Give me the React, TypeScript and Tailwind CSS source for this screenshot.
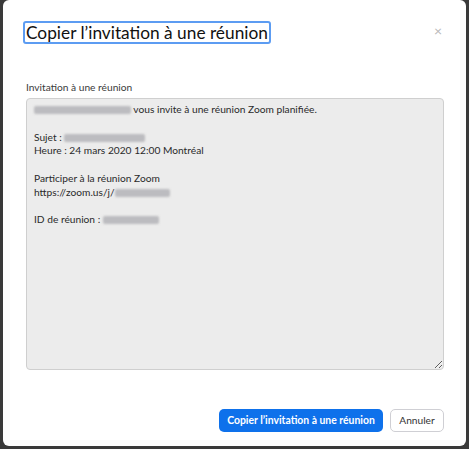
import React from "react";

function Blur({ w }: { w: number }) {
  return (
    <span
      className="inline-block align-middle h-[8px] bg-[#bcbcc0] blur-[1.2px] rounded-[2px]"
      style={{ width: w }}
    />
  );
}

export default function App() {
  return (
    <div className="w-[469px] h-[449px] bg-[#3a3a3a] px-[3px] pb-[3px] font-['Lato','Noto_Sans',sans-serif]">
      <div className="w-full h-full bg-white rounded-[6px] flex flex-col">
        <div className="flex items-start justify-between pt-[21px] pl-[20px] pr-[24px]">
          <div className="border-2 border-[#5c9cf2] rounded-[3px] px-[1px] h-[23px] flex items-center">
            <span className="text-[17.3px] leading-none text-[#111]">
              Copier l’invitation à une réunion
            </span>
          </div>
          <span className="text-[#b8b8b8] text-[14px] leading-none mt-[3px]">×</span>
        </div>
        <div className="pl-[23px] pr-[22px] mt-[37px]">
          <div className="text-[10.2px] leading-[13px] text-[#3a3a3a]">Invitation à une réunion</div>
          <div className="mt-[4px] h-[272px] bg-[#ececec] border border-[#cfcfcf] rounded-[4px] px-[7px] pt-[4px] text-[10.2px] leading-[13.75px] text-[#2a2a2a] resize overflow-auto">
            <div className="whitespace-nowrap">
              <Blur w={97} /> vous invite à une réunion Zoom planifiée.
            </div>
            <div className="h-[13.75px]" />
            <div>
              Sujet : <Blur w={81} />
            </div>
            <div>Heure : 24 mars 2020 12:00 Montréal</div>
            <div className="h-[13.75px]" />
            <div>Participer à la réunion Zoom</div>
            <div>
              https://zoom.us/j/<Blur w={55} />
            </div>
            <div className="h-[13.75px]" />
            <div>
              ID de réunion : <Blur w={56} />
            </div>
          </div>
        </div>
        <div className="flex justify-end gap-[7px] pr-[22px] mt-[39px]">
          <button className="h-[23px] w-[164px] bg-[#0e71eb] text-white rounded-[5px] text-[10.4px] font-bold flex items-center justify-center">
            Copier l’invitation à une réunion
          </button>
          <button className="h-[23px] w-[54px] bg-white border border-[#cfcfd4] text-[#333] rounded-[5px] text-[10.2px] flex items-center justify-center">
            Annuler
          </button>
        </div>
      </div>
    </div>
  );
}
